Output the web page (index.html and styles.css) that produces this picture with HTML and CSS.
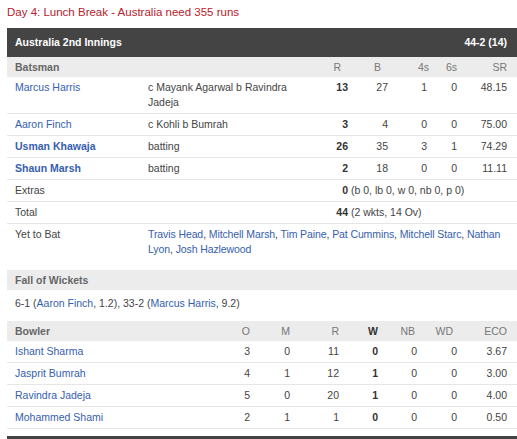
FILE: index.html
```html
<!DOCTYPE html>
<html>
<head>
<meta charset="utf-8">
<link rel="stylesheet" href="styles.css">
</head>
<body>
<div class="page">
  <div class="status">Day 4: Lunch Break - Australia need 355 runs</div>

  <div class="inn-head">
    <span>Australia 2nd Innings</span>
    <span>44-2 (14)</span>
  </div>

  <div class="bat row head">
    <div class="c-name">Batsman</div>
    <div></div>
    <div class="num hoff">R</div>
    <div class="num hoff">B</div>
    <div class="num hoff2">4s</div>
    <div class="num">6s</div>
    <div class="num last">SR</div>
  </div>

  <div class="bat row">
    <div class="c-name"><a>Marcus Harris</a></div>
    <div class="c-dis">c Mayank Agarwal b Ravindra Jadeja</div>
    <div class="num strong">13</div>
    <div class="num">27</div>
    <div class="num">1</div>
    <div class="num">0</div>
    <div class="num last">48.15</div>
  </div>
  <div class="bat row">
    <div class="c-name"><a>Aaron Finch</a></div>
    <div class="c-dis">c Kohli b Bumrah</div>
    <div class="num strong">3</div>
    <div class="num">4</div>
    <div class="num">0</div>
    <div class="num">0</div>
    <div class="num last">75.00</div>
  </div>
  <div class="bat row">
    <div class="c-name"><a class="notout">Usman Khawaja</a></div>
    <div class="c-dis">batting</div>
    <div class="num strong">26</div>
    <div class="num">35</div>
    <div class="num">3</div>
    <div class="num">1</div>
    <div class="num last">74.29</div>
  </div>
  <div class="bat row">
    <div class="c-name"><a class="notout">Shaun Marsh</a></div>
    <div class="c-dis">batting</div>
    <div class="num strong">2</div>
    <div class="num">18</div>
    <div class="num">0</div>
    <div class="num">0</div>
    <div class="num last">11.11</div>
  </div>
  <div class="bat row">
    <div class="c-name">Extras</div>
    <div></div>
    <div class="num strong">0</div>
    <div class="detail">(b 0, lb 0, w 0, nb 0, p 0)</div>
  </div>
  <div class="bat row">
    <div class="c-name">Total</div>
    <div></div>
    <div class="num strong">44</div>
    <div class="detail">(2 wkts, 14 Ov)</div>
  </div>
  <div class="bat row yet">
    <div class="c-name">Yet to Bat</div>
    <div class="yet-list"><a>Travis Head</a>, <a>Mitchell Marsh</a>, <a>Tim Paine</a>, <a>Pat Cummins</a>, <a>Mitchell Starc</a>, <a>Nathan Lyon</a>, <a>Josh Hazlewood</a></div>
  </div>

  <div class="sec-head">Fall of Wickets</div>
  <div class="fow">6-1 (<a>Aaron Finch</a>, 1.2), 33-2 (<a>Marcus Harris</a>, 9.2)</div>

  <div class="bowl row head">
    <div class="c-name">Bowler</div>
    <div class="num">O</div>
    <div class="num">M</div>
    <div class="num">R</div>
    <div class="num strong">W</div>
    <div class="num hoff3">NB</div>
    <div class="num hoff4">WD</div>
    <div class="num last">ECO</div>
  </div>
  <div class="bowl row">
    <div class="c-name"><a>Ishant Sharma</a></div>
    <div class="num">3</div>
    <div class="num">0</div>
    <div class="num">11</div>
    <div class="num strong">0</div>
    <div class="num">0</div>
    <div class="num">0</div>
    <div class="num last">3.67</div>
  </div>
  <div class="bowl row">
    <div class="c-name"><a>Jasprit Bumrah</a></div>
    <div class="num">4</div>
    <div class="num">1</div>
    <div class="num">12</div>
    <div class="num strong">1</div>
    <div class="num">0</div>
    <div class="num">0</div>
    <div class="num last">3.00</div>
  </div>
  <div class="bowl row">
    <div class="c-name"><a>Ravindra Jadeja</a></div>
    <div class="num">5</div>
    <div class="num">0</div>
    <div class="num">20</div>
    <div class="num strong">1</div>
    <div class="num">0</div>
    <div class="num">0</div>
    <div class="num last">4.00</div>
  </div>
  <div class="bowl row">
    <div class="c-name"><a>Mohammed Shami</a></div>
    <div class="num">2</div>
    <div class="num">1</div>
    <div class="num">1</div>
    <div class="num strong">0</div>
    <div class="num">0</div>
    <div class="num">0</div>
    <div class="num last">0.50</div>
  </div>

  <div class="inn-head next"></div>
</div>
</body>
</html>
```

FILE: styles.css
```css
html, body {
  margin: 0;
  padding: 0;
  background: #fff;
  overflow: hidden;
}

.page {
  width: 510px;
  padding: 4px 0 0 7px;
  font-family: "Liberation Sans", Arial, sans-serif;
  font-size: 10.5px;
  color: #444;
}

a {
  color: #3560ad;
  text-decoration: none;
}

a.notout {
  font-weight: bold;
}

.status {
  color: #b8202c;
  font-size: 11.5px;
  line-height: 16px;
  margin-bottom: 8px;
}

.inn-head {
  background: #444;
  color: #fff;
  font-weight: bold;
  font-size: 10.5px;
  height: 29px;
  line-height: 29px;
  padding: 0 10px 0 8px;
  display: flex;
  justify-content: space-between;
}

.inn-head.next {
  margin-top: 7px;
}

.row {
  display: grid;
  line-height: 15px;
  padding: 3px 0;
  border-bottom: 1px solid #e6e6e6;
}

.bat {
  grid-template-columns: 133px 180px 28px 40px 39px 30px 60px;
}

.bowl {
  grid-template-columns: 153px 90px 40px 49px 39px 39px 40px 60px;
}

.row.head {
  background: #ececec;
  color: #777;
  padding: 0;
  line-height: 20px;
  border-bottom: none;
}

.row.head .c-name {
  font-weight: bold;
  color: #666;
}

.c-name {
  padding-left: 8px;
}

.c-dis {
  padding: 0 25px 0 8px;
}

.num {
  text-align: right;
}

.num.last {
  padding-right: 10px;
}

.hoff {
  padding-right: 7px;
}

.hoff2 {
  margin-right: -2px;
}

.hoff3 {
  padding-right: 2px;
}

.hoff4 {
  padding-right: 4px;
}

.strong {
  font-weight: bold;
  color: #333;
}

.detail {
  grid-column: 4 / 8;
  padding-left: 3px;
  white-space: nowrap;
}

.yet {
  border-bottom: none;
  padding-bottom: 5px;
}

.yet-list {
  grid-column: 2 / 8;
  padding: 0 0 0 8px;
  letter-spacing: -0.1px;
}

.sec-head {
  background: #ececec;
  color: #666;
  font-weight: bold;
  line-height: 20px;
  padding-left: 8px;
  margin-top: 8px;
}

.fow {
  line-height: 15px;
  padding: 6px 8px 10px;
}
```
